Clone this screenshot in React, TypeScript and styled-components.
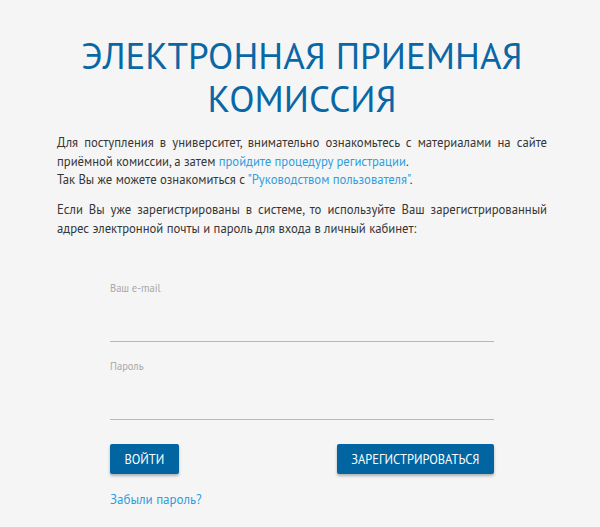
import React from "react";
import styled, { createGlobalStyle } from "styled-components";

const Global = createGlobalStyle`
  html, body { margin: 0; padding: 0; background: #f5f5f5; }
  body { font-family: "PT Sans", "Roboto Condensed", Roboto, "Liberation Sans", sans-serif; color: #333; }
  * { box-sizing: border-box; }
`;

const Page = styled.main`
  width: 490px;
  margin-left: 57px;
  padding-top: 34px;
  padding-bottom: 20px;
`;

const Title = styled.h1`
  margin: 0 0 14px;
  text-align: center;
  color: #0a67a5;
  font-family: inherit;
  font-weight: 400;
  font-size: 37px;
  line-height: 43px;
  letter-spacing: 0;
  text-transform: uppercase;
`;

const Para = styled.p`
  margin: 0 0 11.5px;
  font-size: 12.7px;
  line-height: 18.5px;
  color: #363636;
  text-align: justify;
`;

const Line = styled.span<{ $justify?: boolean }>`
  display: block;
  text-align-last: ${(p) => (p.$justify ? "justify" : "left")};
`;

const Link = styled.a`
  color: #2e9ee0;
  text-decoration: none;
`;

const Form = styled.form`
  width: 384px;
  margin: 43px auto 0;
  display: flex;
  flex-direction: column;
`;

const Field = styled.label`
  display: flex;
  flex-direction: column;
  margin-bottom: 17px;
  &:last-of-type { margin-bottom: 24px; }
`;

const FieldLabel = styled.span`
  font-size: 10.5px;
  line-height: 15px;
  color: #a8a8a8;
`;

const Input = styled.input`
  height: 46px;
  border: none;
  border-bottom: 1px solid #b8b8b8;
  background: transparent;
  outline: none;
  font: inherit;
  padding: 0;
`;

const Actions = styled.div`
  display: flex;
  justify-content: space-between;
  align-items: center;
`;

const Button = styled.button`
  height: 30px;
  padding: 0 14.5px;
  border: none;
  border-radius: 2px;
  background: #0065a1;
  color: #fff;
  font-family: inherit;
  font-size: 12.5px;
  text-transform: uppercase;
  box-shadow: 0 2px 3px rgba(0, 0, 0, 0.28);
  cursor: pointer;
`;

const Forgot = styled.a`
  margin-top: 17px;
  font-size: 13px;
  line-height: 18.5px;
  color: #2e9ee0;
  text-decoration: none;
`;

export default function App() {
  return (
    <>
      <Global />
      <Page>
        <Title>
          Электронная приемная
          <br />
          комиссия
        </Title>
        <Para>
          <Line $justify>
            Для поступления в университет, внимательно ознакомьтесь с материалами на сайте
          </Line>
          <Line>
            приёмной комиссии, а затем <Link href="#">пройдите процедуру регистрации</Link>.
          </Line>
          <Line>
            Так Вы же можете ознакомиться с <Link href="#">"Руководством пользователя"</Link>.
          </Line>
        </Para>
        <Para>
          <Line $justify>
            Если Вы уже зарегистрированы в системе, то используйте Ваш зарегистрированный
          </Line>
          <Line>адрес электронной почты и пароль для входа в личный кабинет:</Line>
        </Para>
        <Form onSubmit={(e) => e.preventDefault()}>
          <Field>
            <FieldLabel>Ваш e-mail</FieldLabel>
            <Input type="email" />
          </Field>
          <Field>
            <FieldLabel>Пароль</FieldLabel>
            <Input type="password" />
          </Field>
          <Actions>
            <Button type="submit">Войти</Button>
            <Button type="button">Зарегистрироваться</Button>
          </Actions>
          <Forgot href="#">Забыли пароль?</Forgot>
        </Form>
      </Page>
    </>
  );
}
